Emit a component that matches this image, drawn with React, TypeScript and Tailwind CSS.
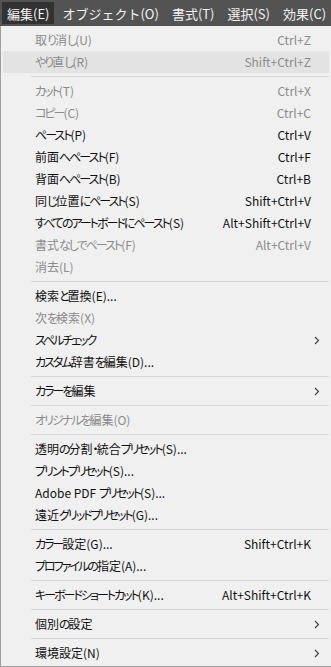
import React from 'react';

type Item =
  | { sep: true }
  | {
      label: string;
      shortcut?: string;
      disabled?: boolean;
      submenu?: boolean;
      active?: boolean;
    };

const items: Item[] = [
  { label: '取り消し(U)', shortcut: 'Ctrl+Z', disabled: true },
  { label: 'やり直し(R)', shortcut: 'Shift+Ctrl+Z', disabled: true, active: true },
  { sep: true },
  { label: 'カット(T)', shortcut: 'Ctrl+X', disabled: true },
  { label: 'コピー(C)', shortcut: 'Ctrl+C', disabled: true },
  { label: 'ペースト(P)', shortcut: 'Ctrl+V' },
  { label: '前面へペースト(F)', shortcut: 'Ctrl+F' },
  { label: '背面へペースト(B)', shortcut: 'Ctrl+B' },
  { label: '同じ位置にペースト(S)', shortcut: 'Shift+Ctrl+V' },
  { label: 'すべてのアートボードにペースト(S)', shortcut: 'Alt+Shift+Ctrl+V' },
  { label: '書式なしでペースト(F)', shortcut: 'Alt+Ctrl+V', disabled: true },
  { label: '消去(L)', disabled: true },
  { sep: true },
  { label: '検索と置換(E)...' },
  { label: '次を検索(X)', disabled: true },
  { label: 'スペルチェック', submenu: true },
  { label: 'カスタム辞書を編集(D)...' },
  { sep: true },
  { label: 'カラーを編集', submenu: true },
  { sep: true },
  { label: 'オリジナルを編集(O)', disabled: true },
  { sep: true },
  { label: '透明の分割・統合プリセット(S)...' },
  { label: 'プリントプリセット(S)...' },
  { label: 'Adobe PDF プリセット(S)...' },
  { label: '遠近グリッドプリセット(G)...' },
  { sep: true },
  { label: 'カラー設定(G)...', shortcut: 'Shift+Ctrl+K' },
  { label: 'プロファイルの指定(A)...' },
  { sep: true },
  { label: 'キーボードショートカット(K)...', shortcut: 'Alt+Shift+Ctrl+K' },
  { sep: true },
  { label: '個別の設定', submenu: true },
  { sep: true },
  { label: '環境設定(N)', submenu: true },
];

const menus = ['編集(E)', 'オブジェクト(O)', '書式(T)', '選択(S)', '効果(C)'];

// kana in the reference font are narrower than Noto's, so tighten just those runs
function Label({ text }: { text: string }) {
  const parts = text.split(/([\u3040-\u30ff]+)/);
  return (
    <span>
      {parts.map((p, i) =>
        /^[\u3040-\u30ff]+$/.test(p) ? (
          <span key={i} className="tracking-[-2px]">
            {p}
          </span>
        ) : (
          <span key={i}>{p}</span>
        )
      )}
    </span>
  );
}

function Chevron() {
  return (
    <svg width="6" height="9" viewBox="0 0 6 9" className="absolute right-[9px]">
      <path d="M1 1 L4.5 4.5 L1 8" fill="none" stroke="#3c3c3c" strokeWidth="1.1" />
    </svg>
  );
}

export default function App() {
  return (
    <div
      className="w-[331px] h-[667px] overflow-hidden bg-white flex flex-col text-[12px] leading-none"
      style={{ fontFamily: "'Noto Sans CJK JP', 'Noto Sans', sans-serif" }}
    >
      {/* menubar */}
      <div className="h-[26px] bg-[#535353] flex items-center pl-[2px] shrink-0 whitespace-nowrap text-[13px] text-[#f2f2f2]">
        {menus.map((m, i) => (
          <div
            key={m}
            className={
              i === 0
                ? 'h-[22px] px-[5px] mr-[3px] flex items-center bg-[#323232]'
                : 'h-[22px] px-[5px] mr-[3px] flex items-center'
            }
          >
            {m}
          </div>
        ))}
      </div>

      {/* dropdown */}
      <div
        className="flex-1 bg-[#f0f0f0] border-l border-b border-[#a0a0a0] pt-[3px] flex flex-col"
        style={{ fontFeatureSettings: "'palt'" }}
      >
        {items.map((it, i) =>
          'sep' in it ? (
            <div key={i} className="h-[7px] flex items-center ml-[30px] mr-[2px]">
              <div className="h-px w-full bg-[#d7d7d7]" />
            </div>
          ) : (
            <div
              key={i}
              className={
                'relative h-[22px] ml-[2px] mr-[2px] pl-[32px] pr-[18px] flex items-center justify-between whitespace-nowrap ' +
                (it.active ? 'bg-[#e3e3e3] ' : '') +
                (it.disabled ? 'text-[#8b8b8b]' : 'text-[#101010]')
              }
            >
              <Label text={it.label} />
              {it.shortcut && <span>{it.shortcut}</span>}
              {it.submenu && <Chevron />}
            </div>
          )
        )}
      </div>
    </div>
  );
}
